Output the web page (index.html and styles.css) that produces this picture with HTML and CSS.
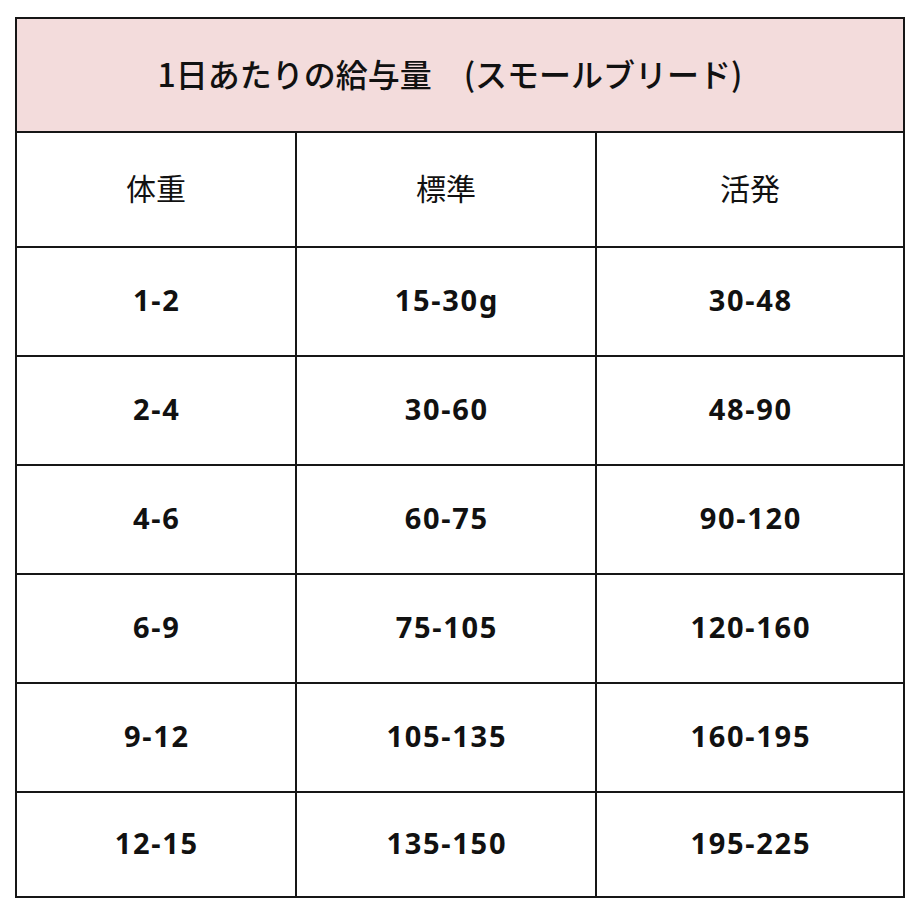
FILE: index.html
```html
<!DOCTYPE html>
<html lang="ja">
<head>
<meta charset="utf-8">
<link rel="stylesheet" href="styles.css">
</head>
<body>
<div class="feed">
  <div class="cell title">1日あたりの給与量　(スモールブリード)</div>
  <div class="cell head">体重</div>
  <div class="cell head">標準</div>
  <div class="cell head">活発</div>
  <div class="cell num">1-2</div><div class="cell num">15-30g</div><div class="cell num">30-48</div>
  <div class="cell num">2-4</div><div class="cell num">30-60</div><div class="cell num">48-90</div>
  <div class="cell num">4-6</div><div class="cell num">60-75</div><div class="cell num">90-120</div>
  <div class="cell num">6-9</div><div class="cell num">75-105</div><div class="cell num">120-160</div>
  <div class="cell num">9-12</div><div class="cell num">105-135</div><div class="cell num">160-195</div>
  <div class="cell num">12-15</div><div class="cell num">135-150</div><div class="cell num">195-225</div>
</div>
</body>
</html>
```
FILE: styles.css
```css
html, body {
  margin: 0;
  padding: 0;
  background: #ffffff;
}
body {
  padding: 17px 0 0 15px;
  font-family: "Noto Sans", "Noto Sans CJK JP", sans-serif;
  color: #111111;
}
.feed {
  display: grid;
  width: 890px;
  box-sizing: border-box;
  grid-template-columns: 280px 300px 308px;
  grid-template-rows: 114px 115px repeat(5, 109px) 105px;
  border-top: 2px solid #161616;
  border-left: 2px solid #161616;
}
.cell {
  box-sizing: border-box;
  border-right: 2px solid #161616;
  border-bottom: 2px solid #161616;
  display: flex;
  align-items: center;
  justify-content: center;
  text-align: center;
}
.title {
  grid-column: 1 / -1;
  background: #f3dcdc;
  font-family: "Noto Sans CJK JP", sans-serif;
  font-weight: 500;
  font-size: 32px;
  padding-right: 20px;
  padding-bottom: 4px;
}
.head {
  font-family: "Noto Sans CJK JP", sans-serif;
  font-weight: 400;
  font-size: 30px;
  padding-bottom: 6px;
}
.num {
  font-family: "Noto Sans", sans-serif;
  font-weight: 700;
  font-size: 29px;
  letter-spacing: 1.7px;
  padding-left: 1.7px;
  padding-bottom: 4px;
}
```
